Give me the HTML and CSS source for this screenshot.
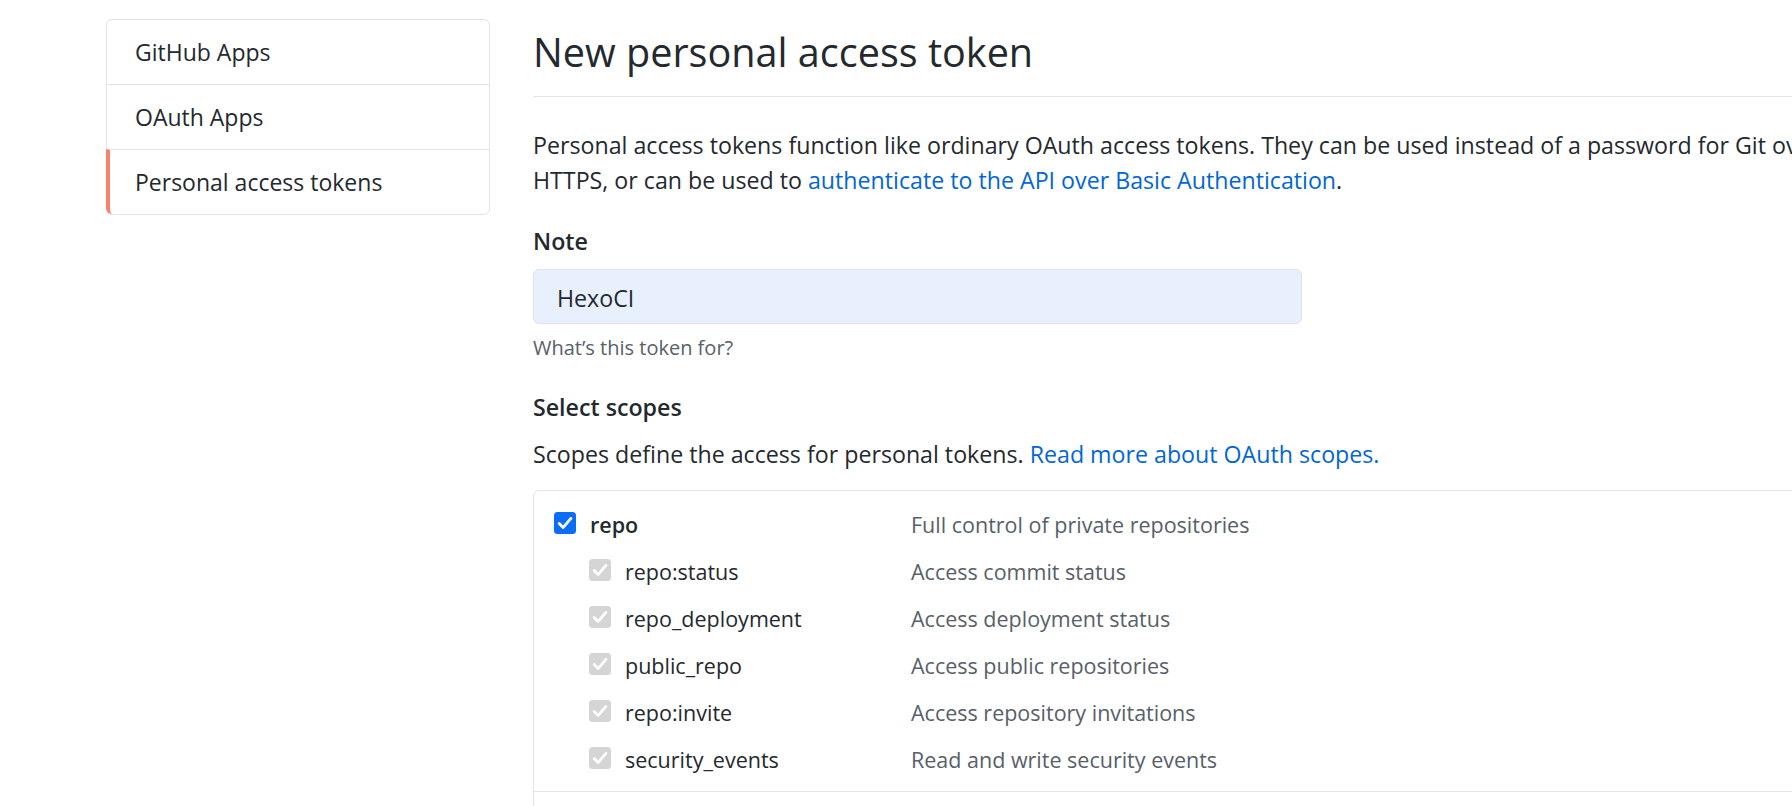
FILE: index.html
```html
<!DOCTYPE html>
<html lang="en">
<head>
<meta charset="utf-8">
<title>New personal access token</title>
<link rel="stylesheet" href="styles.css">
</head>
<body>
<div class="page">
  <nav class="sidebar">
    <a class="menu-item">GitHub Apps</a>
    <a class="menu-item">OAuth Apps</a>
    <a class="menu-item is-active">Personal access tokens</a>
  </nav>
  <main class="content">
    <h1 class="title">New personal access token</h1>
    <p class="intro">Personal access tokens function like ordinary OAuth access tokens. They can be used instead of a password for Git over<br>HTTPS, or can be used to <a class="link">authenticate to the API over Basic Authentication</a>.</p>
    <div class="field-label">Note</div>
    <div class="input">HexoCI</div>
    <div class="hint">What’s this token for?</div>
    <div class="field-label section-label">Select scopes</div>
    <p class="scopes-text">Scopes define the access for personal tokens. <a class="link">Read more about OAuth scopes.</a></p>
    <div class="scopes-box">
      <div class="scope-group">
        <div class="scope-row">
          <div class="scope-name main">
            <span class="cb checked"><svg viewBox="0 0 22 22" width="22" height="22"><rect x="0" y="0" width="22" height="22" rx="3.5"/><path d="M5.2 11.6 L9.1 15.6 L16.9 6.4"/></svg></span>
            <span class="name-text strong">repo</span>
          </div>
          <div class="scope-desc">Full control of private repositories</div>
        </div>
        <div class="scope-row">
          <div class="scope-name sub">
            <span class="cb disabled"><svg viewBox="0 0 22 22" width="22" height="22"><rect x="0" y="0" width="22" height="22" rx="3.5"/><path d="M5.2 11.6 L9.1 15.6 L16.9 6.4"/></svg></span>
            <span class="name-text">repo:status</span>
          </div>
          <div class="scope-desc">Access commit status</div>
        </div>
        <div class="scope-row">
          <div class="scope-name sub">
            <span class="cb disabled"><svg viewBox="0 0 22 22" width="22" height="22"><rect x="0" y="0" width="22" height="22" rx="3.5"/><path d="M5.2 11.6 L9.1 15.6 L16.9 6.4"/></svg></span>
            <span class="name-text">repo_deployment</span>
          </div>
          <div class="scope-desc">Access deployment status</div>
        </div>
        <div class="scope-row">
          <div class="scope-name sub">
            <span class="cb disabled"><svg viewBox="0 0 22 22" width="22" height="22"><rect x="0" y="0" width="22" height="22" rx="3.5"/><path d="M5.2 11.6 L9.1 15.6 L16.9 6.4"/></svg></span>
            <span class="name-text">public_repo</span>
          </div>
          <div class="scope-desc">Access public repositories</div>
        </div>
        <div class="scope-row">
          <div class="scope-name sub">
            <span class="cb disabled"><svg viewBox="0 0 22 22" width="22" height="22"><rect x="0" y="0" width="22" height="22" rx="3.5"/><path d="M5.2 11.6 L9.1 15.6 L16.9 6.4"/></svg></span>
            <span class="name-text">repo:invite</span>
          </div>
          <div class="scope-desc">Access repository invitations</div>
        </div>
        <div class="scope-row">
          <div class="scope-name sub">
            <span class="cb disabled"><svg viewBox="0 0 22 22" width="22" height="22"><rect x="0" y="0" width="22" height="22" rx="3.5"/><path d="M5.2 11.6 L9.1 15.6 L16.9 6.4"/></svg></span>
            <span class="name-text">security_events</span>
          </div>
          <div class="scope-desc">Read and write security events</div>
        </div>
      </div>
      <div class="scope-group next"></div>
    </div>
  </main>
</div>
</body>
</html>
```

FILE: styles.css
```css
html, body {
  margin: 0;
  padding: 0;
  background: #ffffff;
  overflow: hidden;
}

body {
  font-family: "Open Sans", "Noto Sans", "Liberation Sans", sans-serif;
  font-size: 23.2px;
  line-height: 35px;
  color: #24292e;
}

.page {
  display: flex;
  align-items: flex-start;
  gap: 43px;
  padding: 19px 0 0 106px;
}

/* Sidebar */
.sidebar {
  flex: none;
  width: 382px;
  display: flex;
  flex-direction: column;
  border: 1px solid #e1e4e8;
  border-radius: 6px;
}

.menu-item {
  display: flex;
  align-items: center;
  height: 64px;
  padding-left: 28px;
  font-size: 23px;
  color: #24292e;
}

.menu-item + .menu-item {
  border-top: 1px solid #e1e4e8;
}

.menu-item.is-active {
  margin-left: -1px;
  border-left: 4px solid #f9826c;
  padding-left: 25px;
  border-bottom-left-radius: 6px;
}

/* Content */
.content {
  flex: none;
  width: 1400px;
}

.title {
  margin: 0;
  padding: 9px 0 20px;
  font-size: 39.6px;
  line-height: 48px;
  font-weight: 400;
  color: #24292e;
  border-bottom: 1px solid #e1e4e8;
}

.intro {
  margin: 31px 0 0;
  white-space: nowrap;
}

.link {
  color: #0366d6;
  text-decoration: none;
}

.field-label {
  margin-top: 26px;
  font-weight: 600;
}

.input {
  box-sizing: border-box;
  margin-top: 10px;
  width: 769px;
  height: 55px;
  padding: 3px 0 0 23px;
  display: flex;
  align-items: center;
  background: #e8f0fe;
  border: 1px solid #dfe3e8;
  border-radius: 6px;
}

.hint {
  margin-top: 9px;
  font-size: 20px;
  line-height: 29px;
  color: #586069;
}

.section-label {
  margin-top: 28px;
}

.scopes-text {
  margin: 12px 0 0;
}

.scopes-box {
  margin-top: 18px;
  border: 1px solid #e1e4e8;
  border-radius: 6px;
}

.scope-group {
  padding: 10px 0 8px 20px;
  font-size: 21.5px;
}

.scope-group.next {
  height: 60px;
  padding: 0;
  border-top: 1px solid #e1e4e8;
}

.scope-row {
  display: grid;
  grid-template-columns: 357px 1fr;
  align-items: center;
  height: 47px;
  line-height: 47px;
}

.scope-name {
  display: flex;
  align-items: center;
  gap: 14px;
}

.scope-name.sub {
  padding-left: 35px;
}

.name-text.strong {
  font-weight: 600;
}

.scope-desc {
  color: #586069;
}

.cb {
  display: block;
  flex: none;
  width: 22px;
  height: 22px;
  margin-bottom: 3px;
}

.cb svg {
  display: block;
}

.cb path {
  fill: none;
  stroke: #ffffff;
  stroke-width: 2.8;
  stroke-linecap: round;
  stroke-linejoin: round;
}

.cb.checked rect {
  fill: #0b6cf5;
}

.cb.disabled rect {
  fill: #d5d5d5;
}
```
